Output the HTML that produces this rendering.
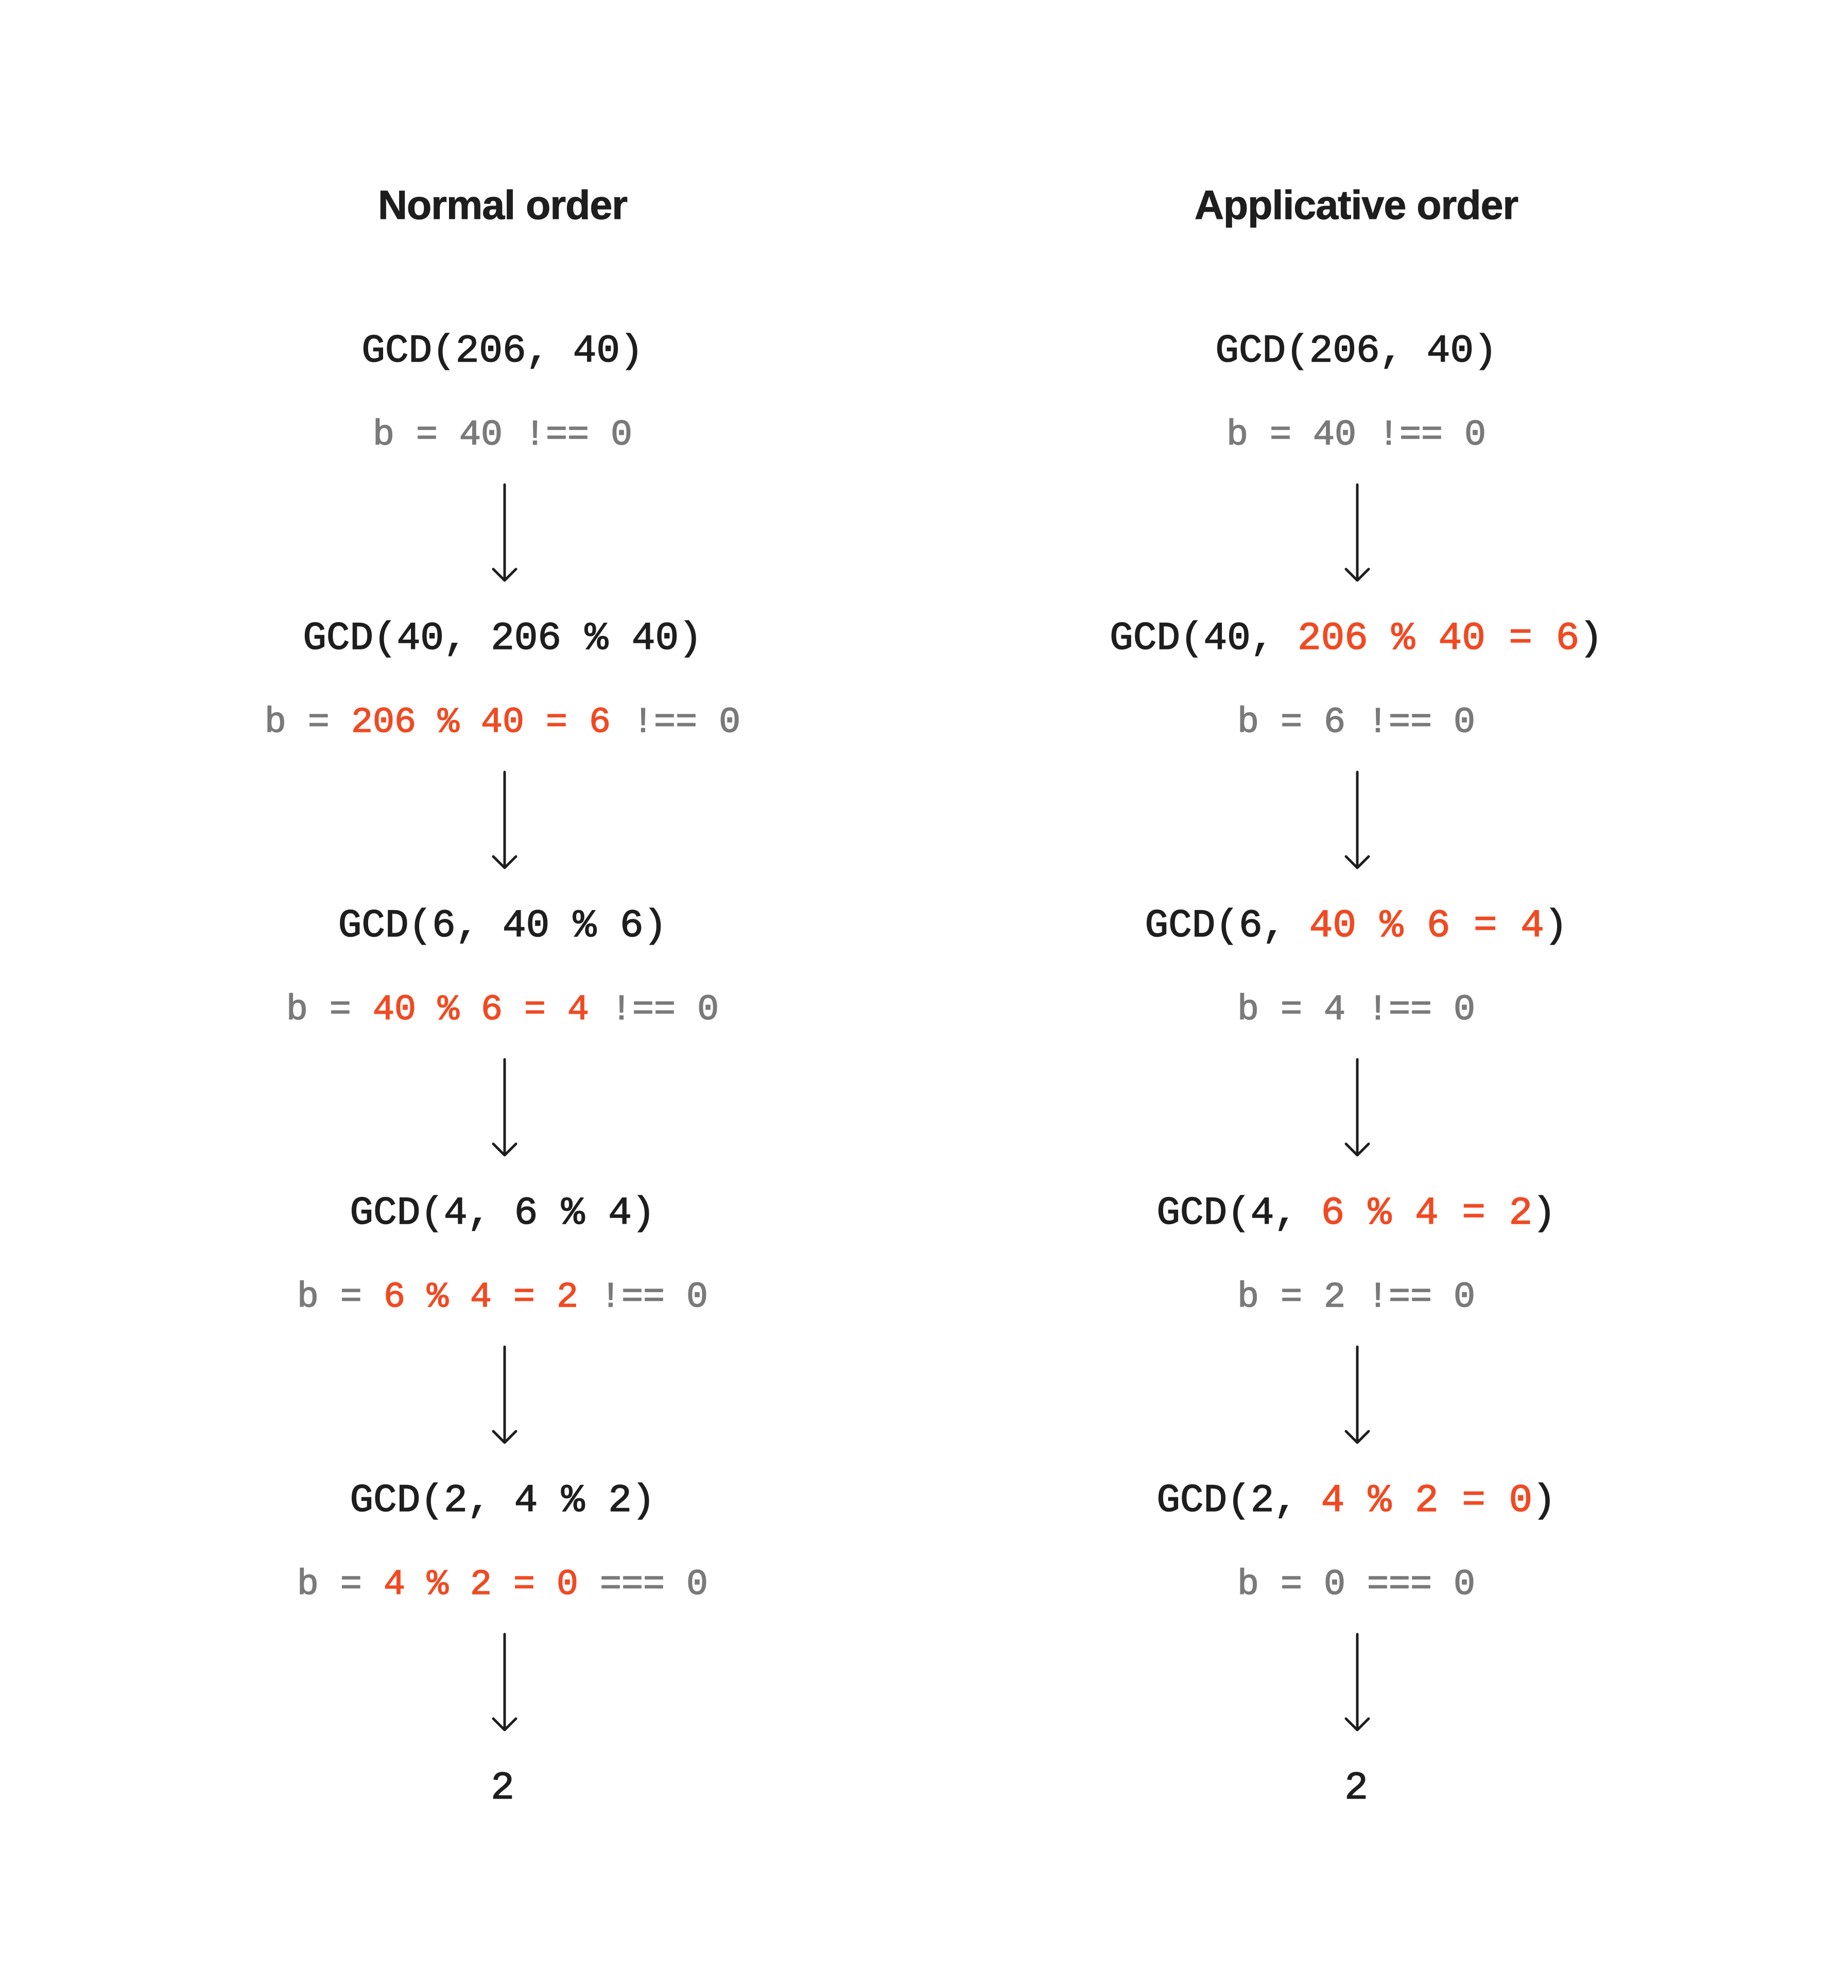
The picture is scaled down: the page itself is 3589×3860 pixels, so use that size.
<!DOCTYPE html>
<html><head><meta charset="utf-8"><style>
html,body{margin:0;padding:0;background:#fff;}
body{width:3589px;height:3860px;position:relative;overflow:hidden;}
.t{position:absolute;width:1400px;text-align:center;font-family:"Liberation Sans",sans-serif;font-weight:bold;font-size:79px;line-height:78px;color:#1e1e1e;letter-spacing:-1px;-webkit-text-stroke:1px #1e1e1e;}
.m{position:absolute;width:1400px;text-align:center;font-family:"Liberation Mono",monospace;font-size:76px;line-height:76px;white-space:pre;-webkit-text-stroke:1.6px currentColor;}
.s{font-size:70px;line-height:70px;}
.g{color:#1e1e1e;}
.b{color:#7a7a7a;}
.r{color:#f04a23;}
.L{left:276px;}
.R{left:1934px;}
svg{position:absolute;}
</style></head><body>
<div class="t L" style="top:359px">Normal order</div>
<div class="t R" style="top:359px">Applicative order</div>

<div class="m g L" style="top:644px">GCD(206, 40)</div>
<div class="m s b L" style="top:811px">b = 40 !== 0</div>
<div class="m g L" style="top:1202px">GCD(40, 206 % 40)</div>
<div class="m s b L" style="top:1369px">b = <span class="r">206 % 40 = 6</span> !== 0</div>
<div class="m g L" style="top:1760px">GCD(6, 40 % 6)</div>
<div class="m s b L" style="top:1927px">b = <span class="r">40 % 6 = 4</span> !== 0</div>
<div class="m g L" style="top:2318px">GCD(4, 6 % 4)</div>
<div class="m s b L" style="top:2485px">b = <span class="r">6 % 4 = 2</span> !== 0</div>
<div class="m g L" style="top:2876px">GCD(2, 4 % 2)</div>
<div class="m s b L" style="top:3043px">b = <span class="r">4 % 2 = 0</span> === 0</div>
<div class="m g L" style="top:3434px">2</div>

<div class="m g R" style="top:644px">GCD(206, 40)</div>
<div class="m s b R" style="top:811px">b = 40 !== 0</div>
<div class="m g R" style="top:1202px">GCD(40, <span class="r">206 % 40 = 6</span>)</div>
<div class="m s b R" style="top:1369px">b = 6 !== 0</div>
<div class="m g R" style="top:1760px">GCD(6, <span class="r">40 % 6 = 4</span>)</div>
<div class="m s b R" style="top:1927px">b = 4 !== 0</div>
<div class="m g R" style="top:2318px">GCD(4, <span class="r">6 % 4 = 2</span>)</div>
<div class="m s b R" style="top:2485px">b = 2 !== 0</div>
<div class="m g R" style="top:2876px">GCD(2, <span class="r">4 % 2 = 0</span>)</div>
<div class="m s b R" style="top:3043px">b = 0 === 0</div>
<div class="m g R" style="top:3434px">2</div>

<svg width="3589" height="3860" style="left:0;top:0" fill="none" stroke="#1e1e1e" stroke-width="5" stroke-linecap="round" stroke-linejoin="round">
<g transform="translate(5,0)">
<path d="M975 941V1127M953 1105L975 1127L997 1105"/>
<path d="M975 1499V1685M953 1663L975 1685L997 1663"/>
<path d="M975 2057V2243M953 2221L975 2243L997 2221"/>
<path d="M975 2615V2801M953 2779L975 2801L997 2779"/>
<path d="M975 3173V3359M953 3337L975 3359L997 3337"/>
</g>
<g transform="translate(1661,0)">
<path d="M975 941V1127M953 1105L975 1127L997 1105"/>
<path d="M975 1499V1685M953 1663L975 1685L997 1663"/>
<path d="M975 2057V2243M953 2221L975 2243L997 2221"/>
<path d="M975 2615V2801M953 2779L975 2801L997 2779"/>
<path d="M975 3173V3359M953 3337L975 3359L997 3337"/>
</g>
</svg>
</body></html>
